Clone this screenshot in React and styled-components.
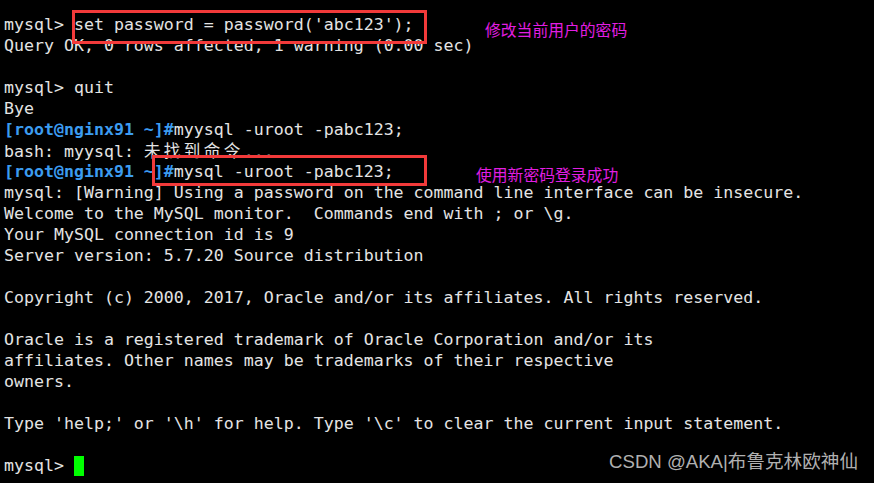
import React from "react";
import styled, { createGlobalStyle } from "styled-components";

const Global = createGlobalStyle`
  html, body { margin: 0; padding: 0; background: #000; }
  body { width: 874px; height: 483px; overflow: hidden; }
`;

const Screen = styled.div`
  position: relative;
  width: 874px;
  height: 483px;
  background: #000;
  box-sizing: border-box;
  padding: 14px 0 0 4px;
  overflow: hidden;
`;

const Terminal = styled.div`
  display: flex;
  flex-direction: column;
  font-family: "DejaVu Sans Mono", monospace;
  font-size: 16.6px;
  line-height: 21px;
  color: #e4e4e4;
  white-space: pre;
`;

const Line = styled.div`
  height: 21px;
`;

const Prompt = styled.span`
  color: #3c9cf0;
  font-weight: bold;
`;

const Wide = styled.span`
  font-family: "Noto Sans CJK SC", sans-serif;
  letter-spacing: 3.4px;
`;

const Cursor = styled.span`
  display: inline-block;
  width: 10px;
  height: 20px;
  background: #00ff00;
  vertical-align: -5px;
`;

const Box = styled.div`
  position: absolute;
  border: 3px solid #f23a3a;
  box-sizing: border-box;
  left: ${(p) => p.$x}px;
  top: ${(p) => p.$y}px;
  width: ${(p) => p.$w}px;
  height: ${(p) => p.$h}px;
`;

const Note = styled.div`
  position: absolute;
  left: ${(p) => p.$x}px;
  top: ${(p) => p.$y}px;
  font-family: "Noto Sans CJK SC", sans-serif;
  font-size: 15.8px;
  line-height: 16px;
  color: #e21ee2;
  white-space: nowrap;
`;

const Mark = styled.div`
  position: absolute;
  right: 16px;
  bottom: 10px;
  font-family: "Liberation Sans", "Noto Sans CJK SC", sans-serif;
  font-size: 18.6px;
  line-height: 22px;
  color: #b0b0b0;
  white-space: nowrap;
`;

export default function App() {
  return (
    <>
      <Global />
      <Screen>
        <Terminal>
          <Line>mysql&gt; set password = password('abc123');</Line>
          <Line>Query OK, 0 rows affected, 1 warning (0.00 sec)</Line>
          <Line> </Line>
          <Line>mysql&gt; quit</Line>
          <Line>Bye</Line>
          <Line>
            <Prompt>[root@nginx91 ~]#</Prompt>myysql -uroot -pabc123;
          </Line>
          <Line>
            bash: myysql: <Wide>未找到命令</Wide>...
          </Line>
          <Line>
            <Prompt>[root@nginx91 ~]#</Prompt>mysql -uroot -pabc123;
          </Line>
          <Line>mysql: [Warning] Using a password on the command line interface can be insecure.</Line>
          <Line>Welcome to the MySQL monitor.  Commands end with ; or \g.</Line>
          <Line>Your MySQL connection id is 9</Line>
          <Line>Server version: 5.7.20 Source distribution</Line>
          <Line> </Line>
          <Line>Copyright (c) 2000, 2017, Oracle and/or its affiliates. All rights reserved.</Line>
          <Line> </Line>
          <Line>Oracle is a registered trademark of Oracle Corporation and/or its</Line>
          <Line>affiliates. Other names may be trademarks of their respective</Line>
          <Line>owners.</Line>
          <Line> </Line>
          <Line>Type 'help;' or '\h' for help. Type '\c' to clear the current input statement.</Line>
          <Line> </Line>
          <Line>
            mysql&gt; <Cursor />
          </Line>
        </Terminal>
        <Box $x={72} $y={10} $w={355} $h={34} />
        <Box $x={152} $y={155} $w={275} $h={31} />
        <Note $x={485} $y={22}>修改当前用户的密码</Note>
        <Note $x={476} $y={167}>使用新密码登录成功</Note>
        <Mark>CSDN @AKA|布鲁克林欧神仙</Mark>
      </Screen>
    </>
  );
}
